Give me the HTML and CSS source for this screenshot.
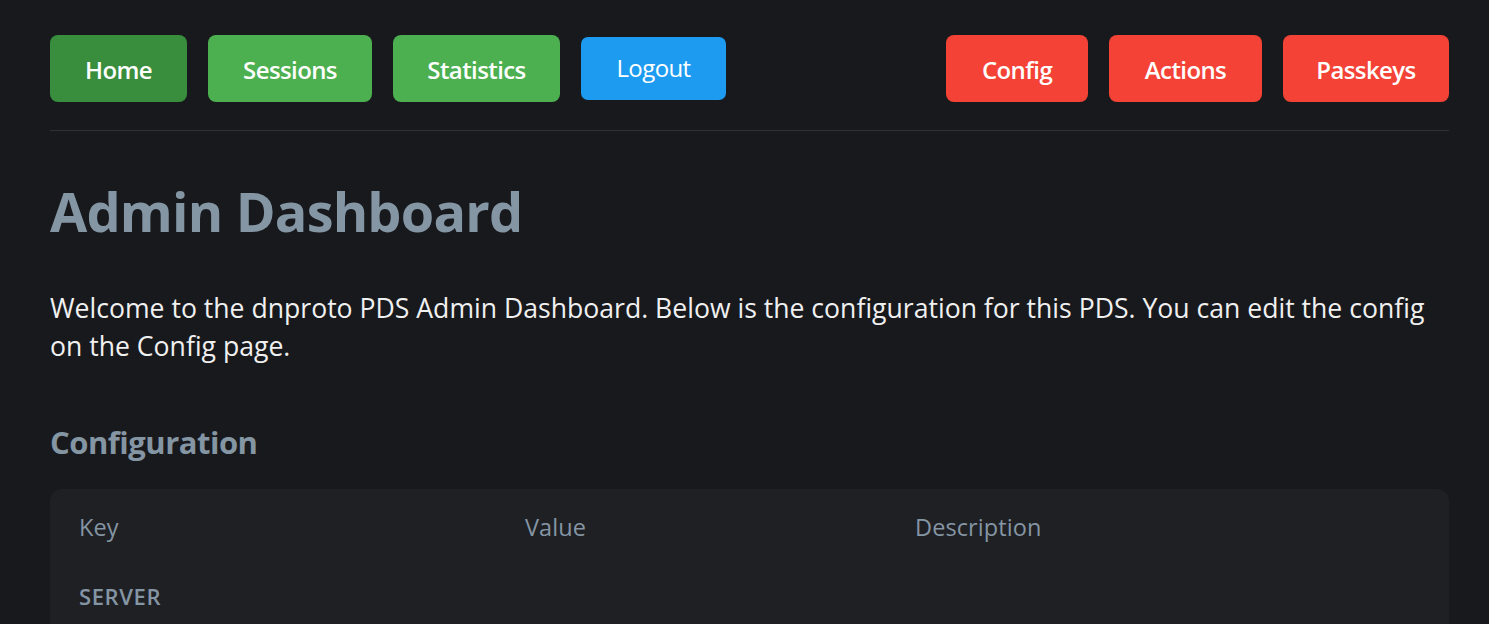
FILE: index.html
```html
<!DOCTYPE html>
<html lang="en">
<head>
<meta charset="utf-8">
<title>Admin Dashboard</title>
<link rel="stylesheet" href="styles.css">
</head>
<body>
<div class="page">
  <nav class="nav">
    <div class="nav-group">
      <a class="btn btn-active" href="#">Home</a>
      <a class="btn btn-green" href="#">Sessions</a>
      <a class="btn btn-green" href="#">Statistics</a>
      <button class="btn-logout" type="button">Logout</button>
    </div>
    <div class="nav-group">
      <a class="btn btn-red btn-config" href="#">Config</a>
      <a class="btn btn-red btn-actions" href="#">Actions</a>
      <a class="btn btn-red btn-passkeys" href="#">Passkeys</a>
    </div>
  </nav>
  <h1 class="title">Admin Dashboard</h1>
  <p class="intro">Welcome to the dnproto PDS Admin Dashboard. Below is the configuration for this PDS. You can edit the config on the Config page.</p>
  <h2 class="section-title">Configuration</h2>
  <div class="card">
    <div class="row row-head">
      <div class="cell c-key">Key</div>
      <div class="cell c-value">Value</div>
      <div class="cell c-desc">Description</div>
    </div>
    <div class="row row-group">
      <div class="cell c-key">SERVER</div>
    </div>
  </div>
</div>
</body>
</html>
```

FILE: styles.css
```css
* { box-sizing: border-box; }
html, body { margin: 0; padding: 0; }
body {
  background: #18191d;
  color: #e8e8e8;
  font-family: "Open Sans", "Noto Sans", sans-serif;
  overflow: hidden;
}
.page {
  padding: 35px 40px 0 50px;
}
.nav {
  display: flex;
  justify-content: space-between;
  align-items: center;
  padding-bottom: 28px;
  border-bottom: 1px solid #2f3034;
}
.nav-group {
  display: flex;
  align-items: center;
  gap: 21px;
}
.btn {
  display: flex;
  align-items: center;
  justify-content: center;
  height: 67px;
  border-radius: 8px;
  color: #ffffff;
  text-decoration: none;
  font-size: 24px;
  font-weight: 600;
  letter-spacing: -0.6px;
  padding-top: 2px;
}
.btn-active { background: #388e3c; width: 137px; }
.btn-green { background: #4caf50; }
.btn-green:nth-child(2) { width: 164px; }
.btn-green:nth-child(3) { width: 167px; }
.btn-red { background: #f44336; }
.btn-config { width: 142px; }
.btn-actions { width: 153px; }
.btn-passkeys { width: 166px; }
.btn-logout {
  width: 145px;
  height: 63px;
  border: none;
  border-radius: 7px;
  background: #1d9bf0;
  color: #ffffff;
  font-family: "Open Sans", "Noto Sans", sans-serif;
  font-size: 24px;
  font-weight: 400;
  letter-spacing: -0.6px;
  padding: 0 0 2px;
}
.title {
  margin: 40px 0 0;
  font-size: 54px;
  font-weight: 700;
  color: #8495a3;
  letter-spacing: -0.8px;
  line-height: 80px;
}
.intro {
  margin: 38px 0 0;
  font-size: 26.6px;
  line-height: 38px;
  color: #f0f0f0;
  letter-spacing: 0;
  max-width: 1399px;
}
.section-title {
  margin: 57px 0 0;
  font-size: 31px;
  font-weight: 700;
  color: #8495a3;
  letter-spacing: -0.5px;
  line-height: 40px;
}
.card {
  margin-top: 27px;
  width: 1399px;
  background: #1f2024;
  border-radius: 12px;
  min-height: 200px;
}
.row {
  display: flex;
}
.cell {
  padding: 0 28px 0 29px;
  color: #8495a3;
}
.c-key { width: 446px; flex: none; }
.c-value { width: 390px; flex: none; }
.c-desc { flex: 1; }
.row-head .cell {
  font-size: 23.5px;
  font-weight: 500;
  padding-top: 22px;
  padding-bottom: 22px;
  letter-spacing: 0.1px;
}
.row-group .cell {
  font-size: 22px;
  font-weight: 600;
  padding-top: 16px;
  letter-spacing: 0.6px;
}
```
